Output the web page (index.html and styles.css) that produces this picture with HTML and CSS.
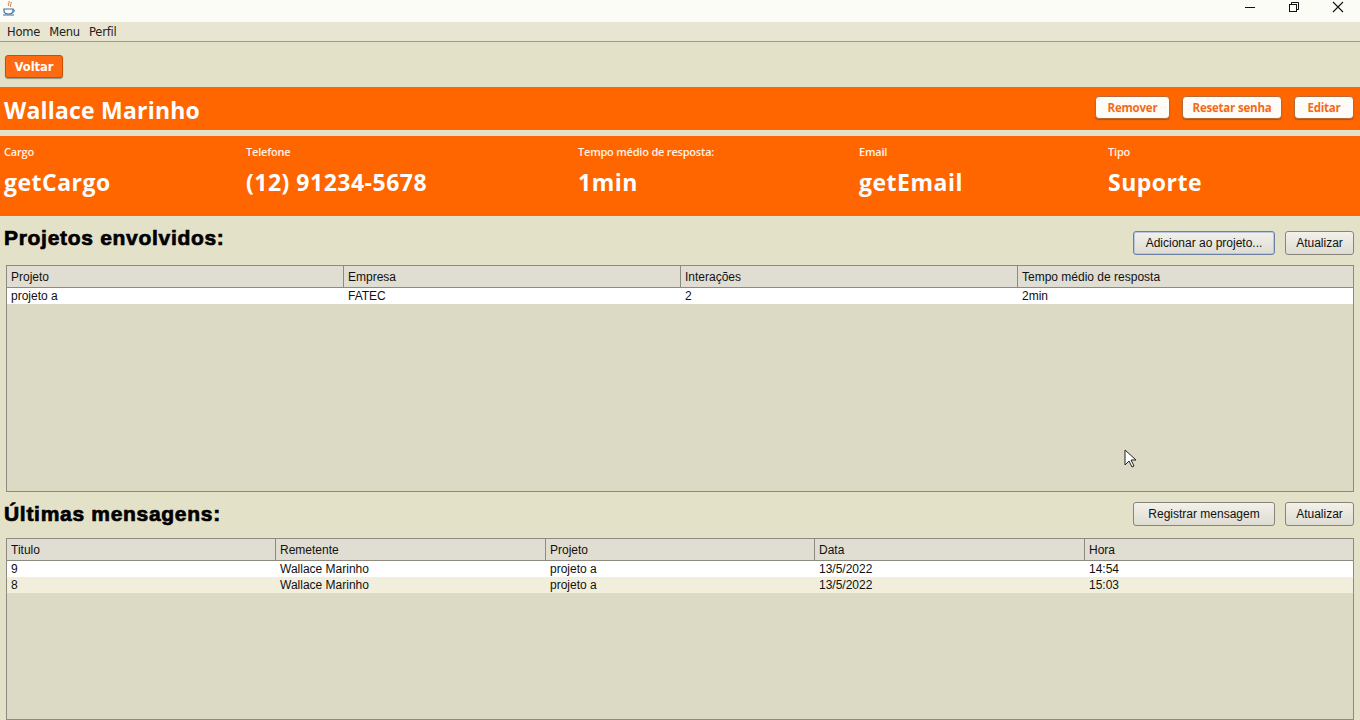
FILE: index.html
```html
<!DOCTYPE html>
<html lang="pt">
<head>
<meta charset="utf-8">
<title>Wallace Marinho</title>
<link rel="stylesheet" href="styles.css">
</head>
<body>
<div class="window">
  <div class="titlebar">
    <svg class="app-icon" width="14" height="16" viewBox="0 0 14 16">
      <path d="M7 1c1 2-2 3 0 5M9 2c1 2-2 3 0 5" stroke="#d46a1a" stroke-width="1" fill="none"/>
      <path d="M2 9h9v2c0 2-2 3-4.5 3S2 13 2 11z" fill="none" stroke="#3a6ea5" stroke-width="1.2"/>
      <path d="M11 9.5c2 0 2 2.5 0 2.5" fill="none" stroke="#3a6ea5" stroke-width="1"/>
      <path d="M1 15h11" stroke="#3a6ea5" stroke-width="1"/>
    </svg>
    <div class="win-controls">
      <svg width="12" height="12" viewBox="0 0 12 12"><path d="M1 6.5h10" stroke="#111" stroke-width="1"/></svg>
      <svg width="12" height="12" viewBox="0 0 12 12"><rect x="1.5" y="3.5" width="7" height="7" fill="none" stroke="#111"/><path d="M3.5 3.5v-2h7v7h-2" fill="none" stroke="#111"/></svg>
      <svg width="12" height="12" viewBox="0 0 12 12"><path d="M1 1l10 10M11 1L1 11" stroke="#111" stroke-width="1.1"/></svg>
    </div>
  </div>
  <div class="menubar">
    <span>Home</span><span>Menu</span><span>Perfil</span>
  </div>
  <div class="toolbar">
    <button class="btn-orange">Voltar</button>
  </div>
  <div class="name-bar">
    <h1>Wallace Marinho</h1>
    <div class="name-actions">
      <button class="btn-white w-rem">Remover</button>
      <button class="btn-white w-res">Resetar senha</button>
      <button class="btn-white w-edi">Editar</button>
    </div>
  </div>
  <div class="info-bar">
    <div class="info c1"><div class="lbl">Cargo</div><div class="val">getCargo</div></div>
    <div class="info c2"><div class="lbl">Telefone</div><div class="val">(12) 91234-5678</div></div>
    <div class="info c3"><div class="lbl">Tempo médio de resposta:</div><div class="val">1min</div></div>
    <div class="info c4"><div class="lbl">Email</div><div class="val">getEmail</div></div>
    <div class="info c5"><div class="lbl">Tipo</div><div class="val">Suporte</div></div>
  </div>

  <div class="section-head">
    <h2>Projetos envolvidos:</h2>
    <div class="actions">
      <button class="btn-gray focused wide">Adicionar ao projeto...</button>
      <button class="btn-gray">Atualizar</button>
    </div>
  </div>
  <div class="table t1">
    <div class="row head cols4">
      <div>Projeto</div><div>Empresa</div><div>Interações</div><div>Tempo médio de resposta</div>
    </div>
    <div class="row data cols4 odd">
      <div>projeto a</div><div>FATEC</div><div>2</div><div>2min</div>
    </div>
  </div>

  <div class="section-head second">
    <h2>Últimas mensagens:</h2>
    <div class="actions">
      <button class="btn-gray wide">Registrar mensagem</button>
      <button class="btn-gray">Atualizar</button>
    </div>
  </div>
  <div class="table t2">
    <div class="row head cols5">
      <div>Titulo</div><div>Remetente</div><div>Projeto</div><div>Data</div><div>Hora</div>
    </div>
    <div class="row data cols5 odd">
      <div>9</div><div>Wallace Marinho</div><div>projeto a</div><div>13/5/2022</div><div>14:54</div>
    </div>
    <div class="row data cols5 even">
      <div>8</div><div>Wallace Marinho</div><div>projeto a</div><div>13/5/2022</div><div>15:03</div>
    </div>
  </div>

  <svg class="cursor" width="14" height="20" viewBox="0 0 14 20">
    <path d="M1 1v15l4-4 3 6 2-1-3-6h5z" fill="#fff" stroke="#222" stroke-width="1"/>
  </svg>
</div>
</body>
</html>
```
FILE: styles.css
```css
* { box-sizing: border-box; }
html, body { margin: 0; padding: 0; }
body {
  width: 1360px;
  height: 720px;
  overflow: hidden;
  background: #e4e1c9;
  font-family: "Liberation Sans", Arial, sans-serif;
  font-size: 12px;
  color: #111;
}
.window { position: relative; width: 1360px; height: 720px; display: flex; flex-direction: column; }

.titlebar {
  height: 22px;
  background: #fcfcf6;
  display: flex;
  align-items: center;
  justify-content: space-between;
  padding-left: 2px;
}
.app-icon { margin-top: -6px; }
.win-controls { display: flex; align-items: center; gap: 32px; padding-right: 16px; margin-top: -8px; }
.win-controls svg { display: block; }

.menubar {
  height: 20px;
  display: flex;
  align-items: center;
  gap: 9px;
  padding-left: 7px;
  border-bottom: 1px solid #9a9a90;
  background: #e8e6d2;
  font-family: "DejaVu Sans", Tahoma, sans-serif;
  font-size: 11.5px;
  color: #222;
}
.menubar span { letter-spacing: -0.2px; }

.toolbar { height: 45px; padding: 13px 0 0 5px; }
.btn-orange {
  width: 58px;
  height: 23px;
  border: 1px solid #c85000;
  border-radius: 3px;
  background: #ff6a10;
  box-shadow: 0 1px 1px rgba(0,0,0,0.35);
  color: #fff;
  font-family: "DejaVu Sans", Tahoma, sans-serif;
  font-weight: bold;
  font-size: 11.5px;
  padding: 0;
}

.name-bar {
  height: 43px;
  background: #ff6600;
  display: flex;
  align-items: center;
  justify-content: space-between;
  padding: 0 6px 0 4px;
}
.name-bar h1 {
  margin: 0;
  color: #fff;
  font-family: "Open Sans", sans-serif;
  font-weight: 700;
  font-size: 23px;
  letter-spacing: 0.2px;
  margin-top: 2px;
}
.name-actions { display: flex; gap: 12px; margin-top: -3px; }
.btn-white {
  height: 23px;
  background: #fffcf7;
  border: 1px solid #b56a3c;
  border-radius: 4px;
  color: #f26a1a;
  font-family: "Open Sans", sans-serif;
  font-weight: 700;
  font-size: 11.5px;
  letter-spacing: -0.2px;
  padding: 0;
  box-shadow: 0 1px 1px rgba(90,40,0,0.4);
}
.w-rem { width: 75px; }
.w-res { width: 100px; }
.w-edi { width: 60px; }

.info-bar {
  margin-top: 6px;
  height: 80px;
  background: #ff6600;
  display: grid;
  grid-template-columns: 242px 332px 281px 249px 1fr;
  padding: 8px 0 0 4px;
  color: #fff;
  font-family: "Open Sans", sans-serif;
}
.info .lbl { font-size: 11px; font-weight: 600; height: 16px; color: #fff3e8; letter-spacing: -0.2px; }
.info .val { font-size: 23px; font-weight: 700; margin-top: 6px; letter-spacing: 0.5px; }

.section-head {
  display: flex;
  justify-content: space-between;
  align-items: flex-start;
  height: 49px;
  padding: 10px 6px 0 4px;
}
.section-head.second { height: 46px; padding-top: 10px; }
.section-head h2 {
  margin: 0;
  font-family: "Liberation Sans", Arial, sans-serif;
  font-weight: 900;
  font-size: 21px;
  color: #000;
  letter-spacing: 0.7px;
  -webkit-text-stroke: 0.7px #000;
}
.actions { display: flex; gap: 10px; margin-top: 5px; }
.section-head.second .actions { margin-top: 0; }
.btn-gray {
  height: 24px;
  width: 69px;
  background: linear-gradient(#f2f1ea, #dedcd2);
  border: 1px solid #888578;
  border-radius: 3px;
  font-family: "Liberation Sans", Arial, sans-serif;
  font-size: 12px;
  color: #111;
  padding: 0;
}
.btn-gray.wide { width: 142px; }
.btn-gray.focused { border-color: #6b7fa3; box-shadow: inset 0 0 0 1px #b9c6dc; }

.table {
  margin: 0 6px 0 6px;
  border: 1px solid #8d8b80;
  background: #dcd9c4;
}
.t1 { height: 227px; }
.t2 { height: 182px; }
.row { display: grid; }
.cols4 { grid-template-columns: 337px 337px 337px 1fr; }
.cols5 { grid-template-columns: 269px 270px 269px 270px 1fr; }
.row.head { height: 22px; background: #e0ded2; border-bottom: 1px solid #8d8b80; }
.row.head div { padding: 4px 0 0 4px; border-right: 1px solid #8d8b80; }
.row.head div:last-child { border-right: none; }
.row.data { height: 16px; }
.row.data div { padding: 1px 0 0 4px; }
.row.odd { background: #ffffff; }
.row.even { background: #f1efdc; }

.cursor { position: absolute; left: 1124px; top: 449px; }
```
